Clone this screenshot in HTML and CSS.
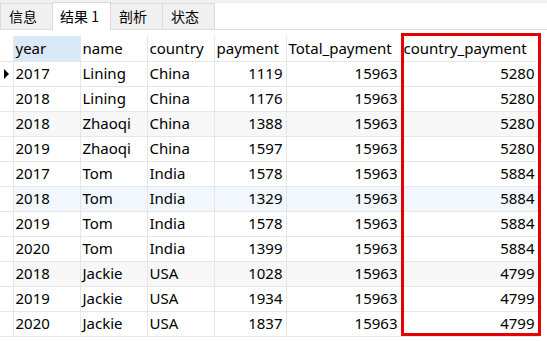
FILE: index.html
```html
<!DOCTYPE html>
<html>
<head>
<meta charset="utf-8">
<link rel="stylesheet" href="styles.css">
</head>
<body>
<div class="tabs">
  <div class="tab">信息</div>
  <div class="tab active">结果 1</div>
  <div class="tab">剖析</div>
  <div class="tab">状态</div>
</div>
<div class="grid-wrap">
  <table class="grid">
    <colgroup>
      <col class="c-ind"><col class="c-year"><col class="c-name"><col class="c-country"><col class="c-pay"><col class="c-total"><col class="c-cp">
    </colgroup>
    <thead>
      <tr><th class="ind"></th><th class="sel">year</th><th>name</th><th>country</th><th>payment</th><th>Total_payment</th><th>country_payment</th></tr>
    </thead>
    <tbody>
      <tr><td class="ind"><span class="arrow"></span></td><td>2017</td><td>Lining</td><td>China</td><td class="num">1119</td><td class="num">15963</td><td class="num">5280</td></tr>
      <tr><td class="ind"></td><td>2018</td><td>Lining</td><td>China</td><td class="num">1176</td><td class="num">15963</td><td class="num">5280</td></tr>
      <tr class="alt"><td class="ind"></td><td>2018</td><td>Zhaoqi</td><td>China</td><td class="num">1388</td><td class="num">15963</td><td class="num">5280</td></tr>
      <tr><td class="ind"></td><td>2019</td><td>Zhaoqi</td><td>China</td><td class="num">1597</td><td class="num">15963</td><td class="num">5280</td></tr>
      <tr><td class="ind"></td><td>2017</td><td>Tom</td><td>India</td><td class="num">1578</td><td class="num">15963</td><td class="num">5884</td></tr>
      <tr class="hover"><td class="ind"></td><td>2018</td><td>Tom</td><td>India</td><td class="num">1329</td><td class="num">15963</td><td class="num">5884</td></tr>
      <tr><td class="ind"></td><td>2019</td><td>Tom</td><td>India</td><td class="num">1578</td><td class="num">15963</td><td class="num">5884</td></tr>
      <tr><td class="ind"></td><td>2020</td><td>Tom</td><td>India</td><td class="num">1399</td><td class="num">15963</td><td class="num">5884</td></tr>
      <tr class="alt"><td class="ind"></td><td>2018</td><td>Jackie</td><td>USA</td><td class="num">1028</td><td class="num">15963</td><td class="num">4799</td></tr>
      <tr><td class="ind"></td><td>2019</td><td>Jackie</td><td>USA</td><td class="num">1934</td><td class="num">15963</td><td class="num">4799</td></tr>
      <tr><td class="ind"></td><td>2020</td><td>Jackie</td><td>USA</td><td class="num">1837</td><td class="num">15963</td><td class="num">4799</td></tr>
    </tbody>
  </table>
  <div class="highlight"></div>
</div>
</body>
</html>
```
FILE: styles.css
```css
html, body {
  margin: 0;
  padding: 0;
  background: #ffffff;
  width: 547px;
  height: 341px;
  overflow: hidden;
  font-family: "Noto Sans", "Noto Sans CJK SC", sans-serif;
  font-size: 15px;
  color: #000;
}

.tabs {
  display: flex;
  align-items: flex-end;
  height: 30px;
  background: linear-gradient(#f0f0f0 0, #f0f0f0 3px, #ffffff 3px);
  border-bottom: 1px solid #dcdcdc;
  box-sizing: border-box;
}

.tab {
  height: 26px;
  box-sizing: border-box;
  padding: 0 8px;
  width: 53px;
  background: #f0f0f0;
  border: 1px solid #dadada;
  border-bottom: none;
  margin-right: -1px;
  font-family: "Noto Sans CJK SC", sans-serif;
  font-size: 14px;
  line-height: 25px;
  color: #000;
}

.tab.active {
  height: 28px;
  width: 59px;
  background: #ffffff;
  margin-bottom: -1px;
  padding-left: 7px;
  line-height: 26px;
}

.grid-wrap {
  position: relative;
  padding-top: 6px;
}

.grid {
  border-collapse: collapse;
  table-layout: fixed;
  width: 538px;
}

.c-ind { width: 13px; }
.c-year { width: 67px; }
.c-name { width: 67px; }
.c-country { width: 67px; }
.c-pay { width: 72px; }
.c-total { width: 115px; }
.c-cp { width: 137px; }

.grid th, .grid td {
  height: 25px;
  box-sizing: border-box;
  border: 1px solid #e6e6e6;
  padding: 0 3px 0 2px;
  white-space: nowrap;
  overflow: hidden;
  text-align: left;
  font-weight: normal;
  line-height: 23px;
}

.grid th {
  border-top: none;
}

.grid th.sel {
  background: #d9e9f7;
}

.grid .ind {
  border-left: none;
  padding: 0;
  position: relative;
}

.grid td.num {
  text-align: right;
}

.grid tr.alt td {
  background: #f7f7f7;
}

.grid tr.hover td {
  background: #f1f7fd;
}

.grid tr.alt td.ind, .grid tr.hover td.ind {
  background: #ffffff;
}

.arrow {
  display: block;
  width: 0;
  height: 0;
  margin-left: 4px;
  border-top: 5px solid transparent;
  border-bottom: 5px solid transparent;
  border-left: 5px solid #000;
}

.highlight {
  position: absolute;
  left: 401px;
  top: 3px;
  width: 140px;
  height: 303px;
  box-sizing: border-box;
  border: 3px solid #e60000;
  pointer-events: none;
}
```
